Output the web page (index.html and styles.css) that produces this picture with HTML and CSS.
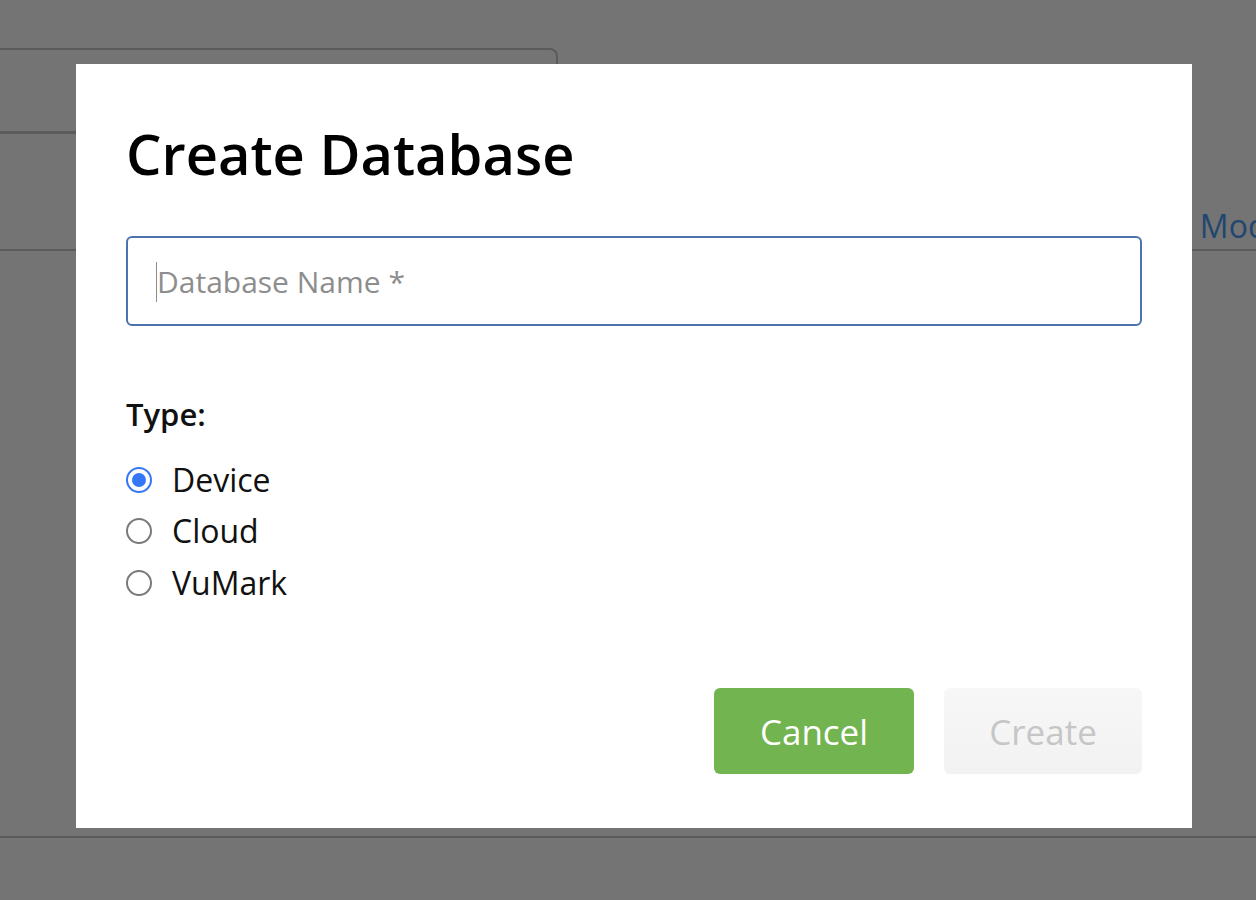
FILE: index.html
```html
<!DOCTYPE html>
<html lang="en">
<head>
<meta charset="utf-8">
<title>Create Database</title>
<link rel="stylesheet" href="styles.css">
</head>
<body>
<div class="page">
  <div class="top-field"></div>
  <div class="rule rule-1"></div>
  <div class="mode-row">
    <span class="mode-link">Change Mode</span>
  </div>
  <div class="rule rule-3"></div>
</div>
<div class="backdrop"></div>
<div class="modal" role="dialog" aria-labelledby="dlg-title">
  <h1 id="dlg-title" class="modal-title">Create Database</h1>
  <div class="field">
    <input class="name-input" type="text" placeholder="Database Name *">
    <span class="caret"></span>
  </div>
  <div class="type-label">Type:</div>
  <div class="radio-list">
    <label class="radio-row"><span class="radio checked"></span><span class="radio-text">Device</span></label>
    <label class="radio-row"><span class="radio"></span><span class="radio-text">Cloud</span></label>
    <label class="radio-row"><span class="radio"></span><span class="radio-text">VuMark</span></label>
  </div>
  <div class="actions">
    <button class="btn btn-cancel">Cancel</button>
    <button class="btn btn-create" disabled>Create</button>
  </div>
</div>
</body>
</html>
```
FILE: styles.css
```css
html, body {
  margin: 0;
  padding: 0;
  width: 1256px;
  height: 900px;
  overflow: hidden;
  background: #ffffff;
  font-family: "Open Sans", "Noto Sans", sans-serif;
}

.page {
  position: relative;
  width: 1256px;
  height: 900px;
}

.top-field {
  position: absolute;
  left: -10px;
  top: 48px;
  width: 568px;
  height: 86px;
  border: 2px solid #c9c9c9;
  border-radius: 8px;
  box-sizing: border-box;
}

.rule {
  position: absolute;
  left: 0;
  height: 2px;
  background: #c9c9c9;
}
.rule-1 { top: 131px; width: 560px; }
.rule-3 { top: 836px; width: 1256px; }

.mode-row {
  position: absolute;
  left: 0;
  top: 190px;
  width: 1256px;
  height: 59px;
  border-bottom: 2px solid #c9c9c9;
  box-sizing: content-box;
}
.mode-link {
  position: absolute;
  left: 1079px;
  top: 14px;
  font-size: 32px;
  line-height: 44px;
  color: #4a9cf5;
  white-space: nowrap;
}

.backdrop {
  position: fixed;
  inset: 0;
  background: rgba(0, 0, 0, 0.545);
}

.modal {
  position: absolute;
  left: 76px;
  top: 64px;
  width: 1116px;
  height: 764px;
  box-sizing: border-box;
  background: #ffffff;
  padding: 53px 50px 54px;
  display: flex;
  flex-direction: column;
}

.modal-title {
  margin: 0;
  font-size: 56px;
  line-height: 72px;
  font-weight: 600;
  color: #000;
}

.field {
  position: relative;
  margin-top: 47px;
}
.name-input {
  display: block;
  width: 100%;
  height: 90px;
  box-sizing: border-box;
  border: 2px solid #4b73ad;
  border-radius: 6px;
  padding: 0 0 0 29px;
  font-family: inherit;
  font-size: 30px;
  color: #222;
  outline: none;
  background: #fff;
}
.name-input::placeholder {
  color: #8d8d8d;
  opacity: 1;
}
.caret {
  position: absolute;
  left: 30px;
  top: 26px;
  width: 1px;
  height: 40px;
  background: #8d8d8d;
}

.type-label {
  margin-top: 68px;
  font-size: 31px;
  line-height: 40px;
  font-weight: 600;
  color: #111;
}

.radio-list {
  margin-top: 20px;
  display: flex;
  flex-direction: column;
}
.radio-row {
  display: flex;
  align-items: center;
  height: 51.5px;
  gap: 20px;
}
.radio {
  width: 26px;
  height: 26px;
  box-sizing: border-box;
  border: 2px solid #7a7a7a;
  border-radius: 50%;
  background: #fff;
  flex: none;
  position: relative;
}
.radio.checked {
  border: 2px solid #3478f6;
}
.radio.checked::after {
  content: "";
  position: absolute;
  left: 4px;
  top: 4px;
  width: 14px;
  height: 14px;
  border-radius: 50%;
  background: #3478f6;
}
.radio-text {
  font-size: 32px;
  line-height: 40px;
  color: #111;
}

.actions {
  margin-top: auto;
  display: flex;
  justify-content: flex-end;
  gap: 30px;
}
.btn {
  height: 86px;
  border: none;
  border-radius: 6px;
  font-family: inherit;
  font-size: 35px;
  padding: 0;
}
.btn-cancel {
  width: 200px;
  background: #72b450;
  color: #fff;
}
.btn-create {
  width: 198px;
  background: linear-gradient(#f7f7f7, #f2f2f2);
  color: #c6c6c6;
}
```
